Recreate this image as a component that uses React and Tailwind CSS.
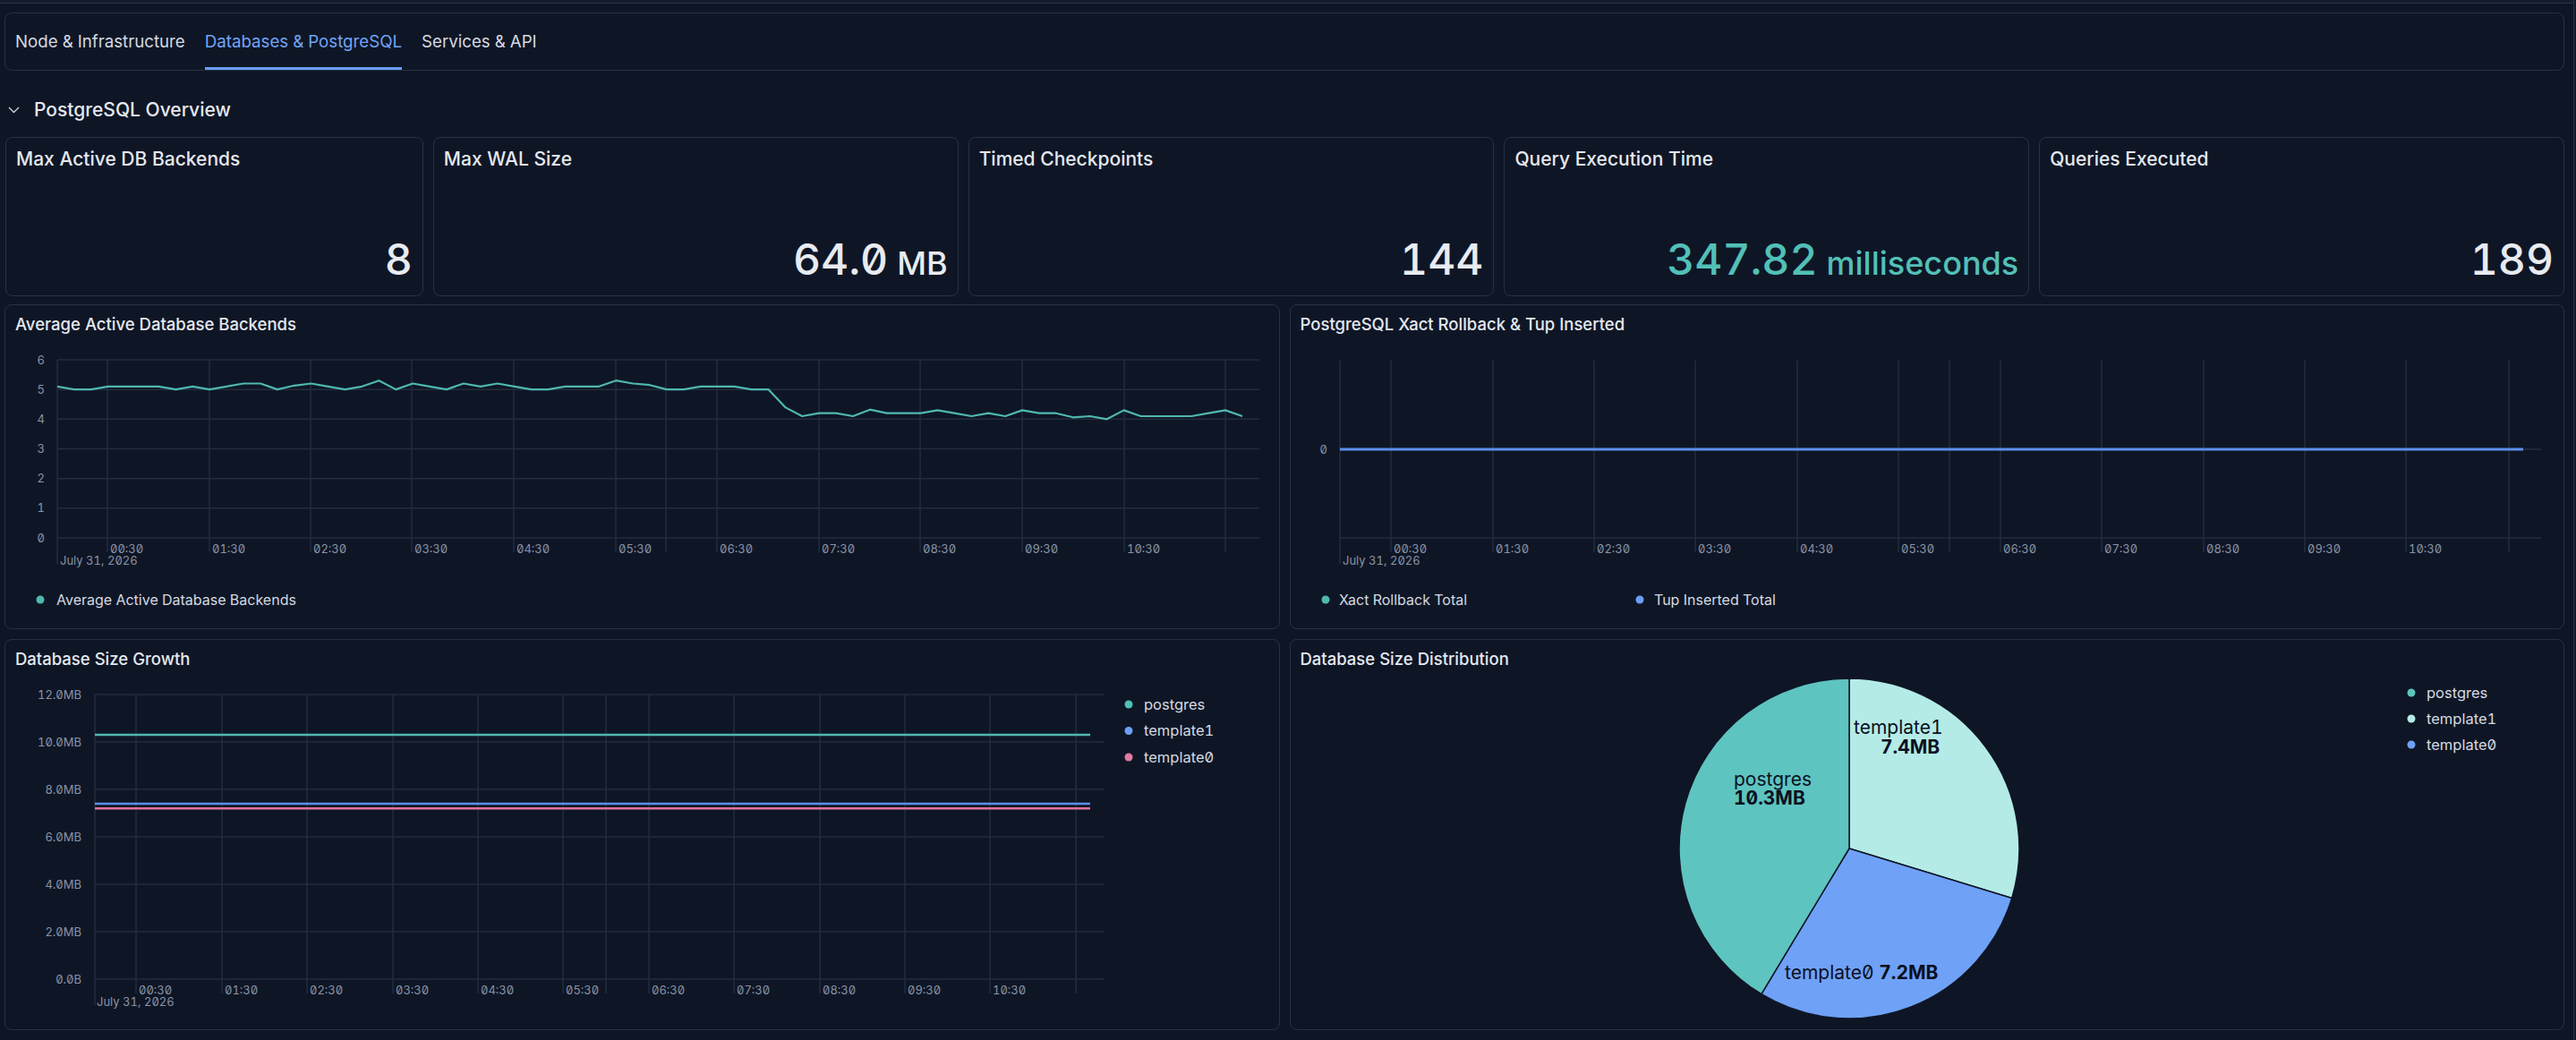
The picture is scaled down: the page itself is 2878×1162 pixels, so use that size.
import React from "react";

const GRID = "#232d3d";
const TICK = "#8a93a5";
const TEAL = "#4fb8af";
const BLUE = "#5d8fea";
const PINK = "#e0729a";

const HOURS = ["00:30", "01:30", "02:30", "03:30", "04:30", "05:30", "06:30", "07:30", "08:30", "09:30", "10:30"];

function Card({ title, children }) {
  return (
    <div className="rounded-lg border border-[#263142] overflow-hidden flex flex-col">
      <div className="px-[11px] pt-[9px] leading-[24px] text-[18.5px] font-medium text-[#e5e8ee] whitespace-nowrap">
        {title}
      </div>
      {children}
    </div>
  );
}

function Stat({ title, value, unit, teal }) {
  return (
    <div className="h-[178px] rounded-lg border border-[#263142] flex flex-col justify-between pt-[10px] pb-[16px] px-[11px]">
      <div className="text-[21px] leading-[28px] font-medium text-[#e5e8ee] whitespace-nowrap">{title}</div>
      <div className={`flex items-baseline justify-end leading-none font-medium ${teal ? "text-[#52c0b7]" : "text-[#e8ebf0]"}`}>
        <span className="text-[48px]">{value}</span>
        {unit && <span className="text-[36px] ml-[10px]">{unit}</span>}
      </div>
    </div>
  );
}

// time axis: gridlines, ticks and labels, all in page coordinates
function TimeAxis({ left, top, bottom, lines, labels, dateX }) {
  return (
    <g>
      <line x1={left} y1={top} x2={left} y2={bottom + 29} stroke={GRID} strokeWidth="1.5" />
      {lines.map((x) => (
        <line key={x} x1={x} y1={top} x2={x} y2={bottom + 16} stroke={GRID} strokeWidth="1.5" />
      ))}
      {labels.map((x, i) => (
        <text key={x} x={x + 3} y={bottom + 12} dy="0.35em" fontSize="13" fill={TICK}>
          {HOURS[i]}
        </text>
      ))}
      <text x={dateX} y={bottom + 25} dy="0.35em" fontSize="13" fill={TICK}>
        July 31, 2026
      </text>
    </g>
  );
}

const AVG = [
  5.1, 5.0, 5.0, 5.1, 5.1, 5.1, 5.1, 5.0, 5.1, 5.0, 5.1, 5.2, 5.2, 5.0, 5.13, 5.2, 5.1, 5.0, 5.1, 5.3, 5.0, 5.2, 5.1, 5.0,
  5.2, 5.1, 5.2, 5.1, 5.0, 5.0, 5.1, 5.1, 5.1, 5.3, 5.2, 5.15, 5.0, 5.0, 5.1, 5.1, 5.1, 5.0, 5.0, 4.4, 4.1, 4.2, 4.2, 4.1,
  4.32, 4.2, 4.2, 4.2, 4.3, 4.2, 4.1, 4.2, 4.1, 4.3, 4.2, 4.2, 4.06, 4.1, 4.0, 4.3, 4.1, 4.1, 4.1, 4.1, 4.2, 4.3, 4.1,
];

function BackendsChart() {
  const yOf = (v) => 601 - v * 33.17;
  const pts = AVG.map((v, i) => `${(64 + i * 18.914).toFixed(1)},${yOf(v).toFixed(1)}`).join(" ");
  return (
    <svg width="1422" height="328" className="block">
      <g transform="translate(-6,-374)">
        {[0, 1, 2, 3, 4, 5, 6].map((v) => (
          <g key={v}>
            <line x1="64" y1={yOf(v)} x2="1407" y2={yOf(v)} stroke={GRID} strokeWidth="1.5" />
            <text x="50" y={yOf(v)} dy="0.35em" textAnchor="end" fontSize="13" fill={TICK}>
              {v}
            </text>
          </g>
        ))}
        <TimeAxis
          left={64}
          top={402}
          bottom={601}
          lines={[120, 234, 347, 460, 574, 688, 744, 801, 915, 1028, 1142, 1256, 1369]}
          labels={[120, 234, 347, 460, 574, 688, 801, 915, 1028, 1142, 1256]}
          dateX={67}
        />
        <polyline points={pts} fill="none" stroke={TEAL} strokeWidth="2.2" strokeLinejoin="round" />
        <circle cx="45" cy="670" r="4.5" fill={TEAL} />
        <text x="63" y="670" dy="0.35em" fontSize="16" fill="#d5d9e0">
          Average Active Database Backends
        </text>
      </g>
    </svg>
  );
}

function RollbackChart() {
  return (
    <svg width="1422" height="328" className="block">
      <g transform="translate(-1442,-374)">
        <line x1="1497" y1="502" x2="2839" y2="502" stroke={GRID} strokeWidth="1.5" />
        <line x1="1497" y1="601" x2="2839" y2="601" stroke={GRID} strokeWidth="1.5" />
        <TimeAxis
          left={1497}
          top={403}
          bottom={601}
          lines={[1554, 1668, 1781, 1894, 2008, 2121, 2178, 2235, 2348, 2462, 2575, 2688, 2803]}
          labels={[1554, 1668, 1781, 1894, 2008, 2121, 2235, 2348, 2462, 2575, 2688]}
          dateX={1500}
        />
        <text x="1483" y="502" dy="0.35em" textAnchor="end" fontSize="13" fill={TICK}>
          0
        </text>
        <line x1="1497" y1="502" x2="2819" y2="502" stroke={BLUE} strokeWidth="3" />
        <circle cx="1481" cy="670" r="4.5" fill={TEAL} />
        <text x="1496" y="670" dy="0.35em" fontSize="16" fill="#d5d9e0">
          Xact Rollback Total
        </text>
        <circle cx="1832" cy="670" r="4.5" fill="#6c9ff5" />
        <text x="1848" y="670" dy="0.35em" fontSize="16" fill="#d5d9e0">
          Tup Inserted Total
        </text>
      </g>
    </svg>
  );
}

function SizeGrowthChart() {
  const yOf = (mb) => 1094 - (mb / 12) * 318;
  const ticks = ["0.0B", "2.0MB", "4.0MB", "6.0MB", "8.0MB", "10.0MB", "12.0MB"];
  const series = [
    { name: "postgres", mb: 10.3, color: TEAL, dot: "#52c0b7" },
    { name: "template1", mb: 7.4, color: BLUE, dot: "#6c9ff5" },
    { name: "template0", mb: 7.2, color: PINK, dot: "#e27a9f" },
  ];
  return (
    <svg width="1422" height="402" className="block">
      <g transform="translate(-6,-748)">
        {ticks.map((t, i) => (
          <g key={t}>
            <line x1="106" y1={yOf(i * 2)} x2="1234" y2={yOf(i * 2)} stroke={GRID} strokeWidth="1.5" />
            <text x="91" y={yOf(i * 2)} dy="0.35em" textAnchor="end" fontSize="13" fill={TICK}>
              {t}
            </text>
          </g>
        ))}
        <TimeAxis
          left={106}
          top={776}
          bottom={1094}
          lines={[152, 248, 343, 439, 534, 629, 677, 725, 820, 916, 1011, 1106, 1202]}
          labels={[152, 248, 343, 439, 534, 629, 725, 820, 916, 1011, 1106]}
          dateX={108}
        />
        {series.map((s) => (
          <line key={s.name} x1="106" y1={yOf(s.mb)} x2="1218" y2={yOf(s.mb)} stroke={s.color} strokeWidth="2.5" />
        ))}
        {series.map((s, i) => (
          <g key={s.name}>
            <circle cx="1261" cy={787 + i * 29.5} r="4.5" fill={s.dot} />
            <text x="1278" y={787 + i * 29.5} dy="0.35em" fontSize="16.5" fill="#d5d9e0">
              {s.name}
            </text>
          </g>
        ))}
      </g>
    </svg>
  );
}

function slice(cx, cy, r, a0, a1) {
  const p = (a) => [cx + r * Math.sin((a * Math.PI) / 180), cy - r * Math.cos((a * Math.PI) / 180)];
  const [x0, y0] = p(a0);
  const [x1, y1] = p(a1);
  const large = a1 - a0 > 180 ? 1 : 0;
  return `M${cx} ${cy} L${x0} ${y0} A${r} ${r} 0 ${large} 1 ${x1} ${y1} Z`;
}

function SizePie() {
  const cx = 2066;
  const cy = 948;
  const r = 190;
  const total = 10.3 + 7.4 + 7.2;
  const a1 = (7.4 / total) * 360;
  const a2 = a1 + (7.2 / total) * 360;
  const legend = [
    ["postgres", "#5ec4c0"],
    ["template1", "#b4ebe7"],
    ["template0", "#6fa1f7"],
  ];
  return (
    <svg width="1422" height="402" className="block">
      <g transform="translate(-1442,-748)">
        <path d={slice(cx, cy, r, 0, a1)} fill="#b4ebe7" stroke="#0e1626" strokeWidth="1.5" />
        <path d={slice(cx, cy, r, a1, a2)} fill="#6fa1f7" stroke="#0e1626" strokeWidth="1.5" />
        <path d={slice(cx, cy, r, a2, 360)} fill="#5ec4c0" stroke="#0e1626" strokeWidth="1.5" />
        <g fontSize="21" fill="#0b1020">
          <text x="2071" y="813" dy="0.35em">template1</text>
          <text x="2101" y="835" dy="0.35em" fontWeight="700">7.4MB</text>
          <text x="1937" y="871" dy="0.35em">postgres</text>
          <text x="1937" y="892" dy="0.35em" fontWeight="700">10.3MB</text>
          <text x="1994" y="1087" dy="0.35em">
            template0 <tspan fontWeight="700">7.2MB</tspan>
          </text>
        </g>
        {legend.map(([name, color], i) => (
          <g key={name}>
            <circle cx="2694" cy={774 + i * 29} r="4.5" fill={color} />
            <text x="2711" y={774 + i * 29} dy="0.35em" fontSize="16.5" fill="#d5d9e0">
              {name}
            </text>
          </g>
        ))}
      </g>
    </svg>
  );
}

export default function App() {
  const tabs = ["Node & Infrastructure", "Databases & PostgreSQL", "Services & API"];
  return (
    <div className="w-[2878px] h-[1162px] overflow-hidden flex bg-[#0e1626] text-[#e5e8ee] font-[Inter,'Noto_Sans',sans-serif] [font-feature-settings:'zero'_1,'tnum'_1]">
      <div className="flex-1 min-w-0 flex flex-col">
        <div className="h-[4px] shrink-0 bg-[#141c2b] border-b border-[#2a3445]" />
        <div className="pl-[5px] pr-[10px] flex flex-col">
          <div className="mt-[10px] h-[65px] rounded-lg border border-[#263142] pl-[11px] pt-[20px] flex gap-[22px]">
            {tabs.map((t, i) => (
              <div
                key={t}
                className={`text-[18.7px] leading-[24px] pb-[7px] border-b-[3px] whitespace-nowrap ${
                  i === 1 ? "text-[#72a4f7] border-[#6a9ef5]" : "text-[#d5d9e0] border-transparent"
                }`}
              >
                {t}
              </div>
            ))}
          </div>

          <div className="mt-[32px] h-[24px] flex items-center gap-[16px] pl-[4px]">
            <svg width="13" height="8" viewBox="0 0 13 8" fill="none">
              <path d="M1 1 L6.5 6.5 L12 1" stroke="#c9ced6" strokeWidth="1.4" />
            </svg>
            <span className="text-[21px] leading-[24px] font-medium text-[#e5e8ee]">PostgreSQL Overview</span>
          </div>

          <div className="mt-[18px] ml-[1px] grid grid-cols-[467fr_587fr_588fr_587fr_587fr] gap-[11px]">
            <Stat title="Max Active DB Backends" value="8" />
            <Stat title="Max WAL Size" value="64.0" unit="MB" />
            <Stat title="Timed Checkpoints" value="144" />
            <Stat title="Query Execution Time" value="347.82" unit="milliseconds" teal />
            <Stat title="Queries Executed" value="189" />
          </div>

          <div className="mt-[9px] h-[363px] grid grid-cols-2 gap-[11px]">
            <Card title="Average Active Database Backends">
              <BackendsChart />
            </Card>
            <Card title="PostgreSQL Xact Rollback & Tup Inserted">
              <RollbackChart />
            </Card>
          </div>

          <div className="mt-[11px] h-[437px] grid grid-cols-2 gap-[11px]">
            <Card title="Database Size Growth">
              <SizeGrowthChart />
            </Card>
            <Card title="Database Size Distribution">
              <SizePie />
            </Card>
          </div>
        </div>
      </div>
      <div className="w-[3px] shrink-0 border-l border-[#2a3445] bg-[#141c2b]" />
    </div>
  );
}
